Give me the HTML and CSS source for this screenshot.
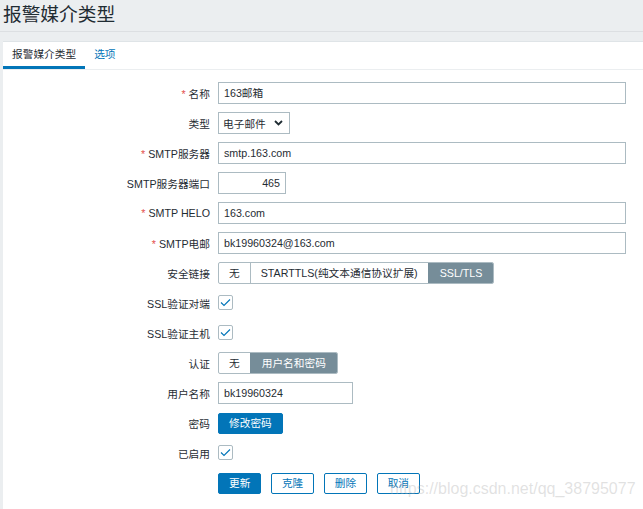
FILE: index.html
```html
<!DOCTYPE html>
<html lang="zh">
<head>
<meta charset="utf-8">
<title>报警媒介类型</title>
<link rel="stylesheet" href="styles.css">
</head>
<body>
<header class="page-header">
  <h1 class="page-title">报警媒介类型</h1>
</header>
<main class="panel">
  <nav class="tabs">
    <span class="tab tab-active">报警媒介类型</span>
    <span class="tab">选项</span>
  </nav>
  <form class="form">
    <label class="lbl"><span class="req">*</span> 名称</label>
    <div class="ctl"><span class="input input-wide">163邮箱</span></div>

    <label class="lbl">类型</label>
    <div class="ctl"><span class="select">电子邮件<svg class="chev" width="9" height="6" viewBox="0 0 9 6"><polyline points="1,1 4.5,4.5 8,1" fill="none" stroke="#1f2c33" stroke-width="1.8"/></svg></span></div>

    <label class="lbl"><span class="req">*</span> SMTP服务器</label>
    <div class="ctl"><span class="input input-wide">smtp.163.com</span></div>

    <label class="lbl">SMTP服务器端口</label>
    <div class="ctl"><span class="input input-port">465</span></div>

    <label class="lbl"><span class="req">*</span> SMTP HELO</label>
    <div class="ctl"><span class="input input-wide">163.com</span></div>

    <label class="lbl"><span class="req">*</span> SMTP电邮</label>
    <div class="ctl"><span class="input input-wide">bk19960324@163.com</span></div>

    <label class="lbl">安全链接</label>
    <div class="ctl">
      <span class="seg">
        <span class="seg-item">无</span>
        <span class="seg-item">STARTTLS(纯文本通信协议扩展)</span>
        <span class="seg-item seg-on">SSL/TLS</span>
      </span>
    </div>

    <label class="lbl">SSL验证对端</label>
    <div class="ctl"><span class="check"><svg width="11" height="9" viewBox="0 0 11 9"><polyline points="1,4.5 4,7.5 10,1.5" fill="none" stroke="#0275b8" stroke-width="1.1"/></svg></span></div>

    <label class="lbl">SSL验证主机</label>
    <div class="ctl"><span class="check"><svg width="11" height="9" viewBox="0 0 11 9"><polyline points="1,4.5 4,7.5 10,1.5" fill="none" stroke="#0275b8" stroke-width="1.1"/></svg></span></div>

    <label class="lbl">认证</label>
    <div class="ctl">
      <span class="seg">
        <span class="seg-item">无</span>
        <span class="seg-item seg-on">用户名和密码</span>
      </span>
    </div>

    <label class="lbl">用户名称</label>
    <div class="ctl"><span class="input input-user">bk19960324</span></div>

    <label class="lbl">密码</label>
    <div class="ctl"><span class="btn btn-main">修改密码</span></div>

    <label class="lbl">已启用</label>
    <div class="ctl"><span class="check"><svg width="11" height="9" viewBox="0 0 11 9"><polyline points="1,4.5 4,7.5 10,1.5" fill="none" stroke="#0275b8" stroke-width="1.1"/></svg></span></div>

    <span class="lbl"></span>
    <div class="ctl actions">
      <span class="btn btn-main">更新</span>
      <span class="btn btn-alt">克隆</span>
      <span class="btn btn-alt">删除</span>
      <span class="btn btn-alt">取消</span>
    </div>
  </form>
  <div class="watermark">https://blog.csdn.net/qq_38795077</div>
</main>
</body>
</html>
```

FILE: styles.css
```css
html, body {
  margin: 0;
  padding: 0;
}
body {
  background: #ebeef0;
  font-family: "Liberation Sans", Arial, "Noto Sans CJK SC", sans-serif;
  font-size: 10.7px;
  color: #1f2c33;
  width: 643px;
  height: 509px;
  overflow: hidden;
}
.page-header {
  height: 31px;
  border-bottom: 1px solid #dcdfe2;
  padding-left: 3px;
}
.page-title {
  margin: 0;
  font-weight: normal;
  font-size: 18.7px;
  line-height: 29px;
  color: #1f2c33;
}
.panel {
  position: relative;
  margin: 9px 0 0 3px;
  background: #ffffff;
  border-top: 1px solid #dfe4e7;
  height: 470px;
}
.tabs {
  display: flex;
  border-bottom: 1px solid #ebeef0;
  height: 27px;
}
.tab {
  padding: 0 9px;
  line-height: 24px;
  height: 24px;
  color: #0275b8;
  border-bottom: 3px solid transparent;
}
.tab-active {
  color: #1f2c33;
  border-bottom-color: #0275b8;
}
.form {
  display: grid;
  grid-template-columns: 207px 1fr;
  grid-auto-rows: 22px;
  column-gap: 8px;
  row-gap: 8px;
  align-items: center;
  padding-top: 12px;
  margin: 0;
}
.lbl {
  text-align: right;
  white-space: nowrap;
}
.req {
  color: #e3524f;
}
.ctl {
  display: flex;
  align-items: center;
  height: 22px;
}
.input {
  box-sizing: border-box;
  height: 22px;
  line-height: 20px;
  border: 1px solid #acbbc2;
  padding: 0 5px;
  background: #fff;
  white-space: nowrap;
}
.input-wide { width: 408px; }
.input-port { width: 68px; text-align: right; }
.input-user { width: 135px; }
.select {
  box-sizing: border-box;
  display: flex;
  align-items: center;
  justify-content: space-between;
  width: 72px;
  height: 22px;
  border: 1px solid #acbbc2;
  padding: 0 6px 0 4px;
}
.chev { display: block; }
.seg {
  display: inline-flex;
  height: 22px;
  box-sizing: border-box;
  border: 1px solid #acbbc2;
  border-radius: 2px;
  overflow: hidden;
}
.seg-item {
  padding: 0 10px;
  line-height: 20px;
  white-space: nowrap;
}
.seg-item + .seg-item {
  border-left: 1px solid #acbbc2;
}
.seg-on {
  background: #768d99;
  color: #ffffff;
  border-left-color: #768d99 !important;
  margin: -1px -1px -1px 0;
  line-height: 22px;
  padding: 0 12px 0 11px;
}
.check {
  box-sizing: border-box;
  width: 15px;
  height: 15px;
  margin-top: -2px;
  border: 1px solid #acbbc2;
  border-radius: 2px;
  display: flex;
  align-items: center;
  justify-content: center;
  background: #fff;
}
.check svg { display: block; }
.btn {
  box-sizing: border-box;
  height: 21px;
  line-height: 19px;
  padding: 0 10px;
  border: 1px solid #0275b8;
  border-radius: 2px;
  white-space: nowrap;
}
.btn-main {
  background: #0275b8;
  color: #ffffff;
}
.btn-alt {
  background: #ffffff;
  color: #0275b8;
}
.actions {
  gap: 9.5px;
}
.watermark {
  position: absolute;
  left: 387px;
  top: 438px;
  font-size: 16px;
  color: rgba(170, 170, 170, 0.35);
  white-space: nowrap;
  pointer-events: none;
}
```
